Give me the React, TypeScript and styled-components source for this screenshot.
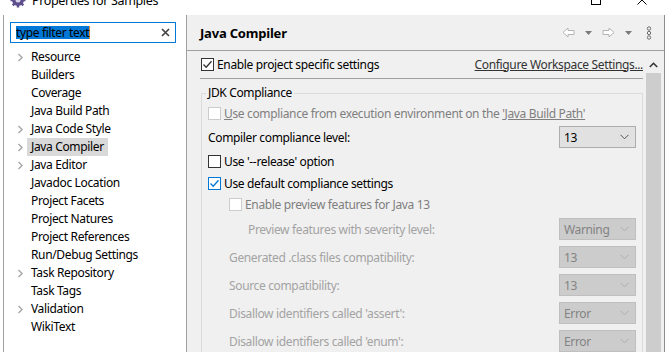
import React from "react";
import styled, { createGlobalStyle } from "styled-components";

const GlobalStyle = createGlobalStyle`
  html, body { margin: 0; padding: 0; overflow: hidden; }
  body {
    font-family: "Noto Sans", "Open Sans", sans-serif;
    font-size: 12px;
    letter-spacing: -0.35px;
    color: #000;
  }
`;

const Window = styled.div`
  width: 669px;
  height: 352px;
  display: flex;
  flex-direction: column;
  overflow: hidden;
  background: #fff;
`;

const TitleBar = styled.div`
  height: 15px;
  flex: none;
  overflow: hidden;
  background: #fff;
`;

const TitleInner = styled.div`
  height: 30px;
  margin-top: -15px;
  display: flex;
  align-items: center;
  padding-left: 10px;
  padding-right: 4px;
`;

const TitleText = styled.span`
  font-size: 12.5px;
  margin-left: 6px;
  color: #000;
`;

const WinButton = styled.div`
  width: 46px;
  display: flex;
  justify-content: center;
  align-items: center;
`;

const Spacer = styled.div`
  flex: 1;
`;

const Body = styled.div`
  flex: 1;
  min-height: 0;
  display: flex;
  background: #fff;
  padding-left: 3px;
  padding-right: 4px;
`;

const Sidebar = styled.aside`
  width: 184px;
  flex: none;
  box-sizing: border-box;
  border-left: 1px solid #a0a0a0;
  border-right: 1px solid #a0a0a0;
  background: #fff;
  padding: 7px 0 0 6px;
`;

const FilterBox = styled.div`
  width: 166px;
  height: 21px;
  box-sizing: border-box;
  border: 1px solid #0078d7;
  display: flex;
  align-items: center;
  padding: 0 5px;
`;

const Selected = styled.span`
  background: #0078d7;
  color: #000;
  line-height: 13px;
  border-right: 1px solid #e8842a;
`;

const Tree = styled.ul`
  list-style: none;
  margin: 5px 0 0;
  padding: 0;
`;

const TreeRow = styled.li`
  height: 18px;
  display: flex;
  align-items: center;
`;

const Twisty = styled.span`
  width: 17px;
  height: 18px;
  flex: none;
  display: flex;
  align-items: center;
`;

const TreeLabel = styled.span<{ $selected?: boolean }>`
  height: 18px;
  line-height: 18px;
  padding: 0 4px;
  background: ${(p) => (p.$selected ? "#d9d9d9" : "transparent")};
`;

const Panel = styled.section`
  width: 478px;
  flex: none;
  box-sizing: border-box;
  border-right: 1px solid #8c8c8c;
  background: #f0f0f0;
  display: flex;
  flex-direction: column;
  min-height: 0;
`;

const Header = styled.header`
  height: 35px;
  flex: none;
  border-bottom: 1px solid #a0a0a0;
  display: flex;
  align-items: center;
  padding: 0 12px 0 13px;
`;

const HeaderTitle = styled.h1`
  margin: 0;
  font-size: 13px;
  font-weight: 700;
  letter-spacing: -0.2px;
`;

const NavIcons = styled.div`
  margin-left: auto;
  display: flex;
  align-items: center;
  gap: 10px;
`;

const Kebab = styled.span`
  margin-left: 4px;
  display: flex;
`;

const Content = styled.div`
  flex: 1;
  min-height: 0;
  display: flex;
  overflow: hidden;
`;

const Main = styled.div`
  flex: 1;
  min-width: 0;
  padding-left: 13px;
  display: flex;
  flex-direction: column;
  overflow: hidden;
`;

const TopRow = styled.div`
  margin-top: 5px;
  height: 16px;
  flex: none;
  display: flex;
  align-items: center;
`;

const Link = styled.a<{ $disabled?: boolean }>`
  color: ${(p) => (p.$disabled ? "#7f7f7f" : "#333")};
  text-decoration: underline;
  cursor: pointer;
`;

const Divider = styled.div`
  margin-top: 6px;
  height: 1px;
  flex: none;
  background: #a0a0a0;
`;

const Group = styled.fieldset`
  margin: 6px 0 0 1px;
  padding: 0 6px;
  border: 1px solid #dcdcdc;
  min-width: 0;
  flex: none;
`;

const Legend = styled.legend`
  padding: 0 2px;
  margin-left: -2px;
  line-height: 16px;
`;

const Row = styled.div<{ $h: number; $indent?: number }>`
  height: ${(p) => p.$h}px;
  padding-left: ${(p) => p.$indent ?? 0}px;
  display: flex;
  align-items: center;
`;

const Label = styled.span<{ $disabled?: boolean }>`
  color: ${(p) => (p.$disabled ? "#a3a3a3" : "#000")};
  white-space: nowrap;
`;

const CheckLabel = styled.span<{ $disabled?: boolean }>`
  margin-left: 3px;
  color: ${(p) => (p.$disabled ? "#7f7f7f" : "#000")};
  white-space: nowrap;
`;

const Box = styled.span<{ $color: string; $offset?: number }>`
  width: 13px;
  height: 13px;
  flex: none;
  box-sizing: border-box;
  margin-left: ${(p) => p.$offset ?? 0}px;
  border: 1px solid ${(p) => p.$color};
  background: #fff;
  display: flex;
  align-items: center;
  justify-content: center;
`;

const Combo = styled.div<{ $disabled?: boolean }>`
  width: 77px;
  height: 22px;
  margin-left: auto;
  flex: none;
  box-sizing: border-box;
  border: 1px solid ${(p) => (p.$disabled ? "#bfbfbf" : "#adadad")};
  background: ${(p) => (p.$disabled ? "#cccccc" : "#e1e1e1")};
  color: ${(p) => (p.$disabled ? "#838383" : "#000")};
  display: flex;
  align-items: center;
  padding: 0 6px 0 4px;
`;

const ComboValue = styled.span`
  flex: 1;
`;

const ScrollBar = styled.div`
  width: 17px;
  flex: none;
  margin: 5px 2px 0 2px;
  display: flex;
  flex-direction: column;
`;

const ScrollUp = styled.div`
  height: 17px;
  display: flex;
  align-items: center;
  justify-content: center;
`;

const Thumb = styled.div`
  flex: 1;
  margin: 0 1px;
  background: #cdcdcd;
`;

const Chevron = () => (
  <svg width="17" height="18" viewBox="0 0 17 18">
    <path d="M8.5 6 L12 9.5 L8.5 13" fill="none" stroke="#a6a6a6" strokeWidth="1.4" />
  </svg>
);

const Check = ({ color }: { color: string }) => (
  <svg width="11" height="11" viewBox="0 0 11 11">
    <path d="M1.5 5.5 L4.2 8.2 L9.5 2.2" fill="none" stroke={color} strokeWidth="1.3" />
  </svg>
);

const Checkbox = ({ state, offset }: { state: "on" | "off" | "blue" | "disabled"; offset?: number }) => {
  const color = state === "disabled" ? "#cccccc" : state === "blue" ? "#0078d7" : "#333";
  return (
    <Box $color={color} $offset={offset}>
      {state === "on" && <Check color="#333" />}
      {state === "blue" && <Check color="#0078d7" />}
    </Box>
  );
};

const DropArrow = ({ disabled }: { disabled?: boolean }) => (
  <svg width="9" height="6" viewBox="0 0 9 6">
    <path d="M0.5 0.8 L4.5 4.8 L8.5 0.8" fill="none" stroke={disabled ? "#adadad" : "#555"} strokeWidth="1" />
  </svg>
);

const ComboBox = ({ value, disabled }: { value: string; disabled?: boolean }) => (
  <Combo $disabled={disabled}>
    <ComboValue>{value}</ComboValue>
    <DropArrow disabled={disabled} />
  </Combo>
);

const HollowArrow = ({ dir }: { dir: "left" | "right" }) => (
  <svg width="13" height="11" viewBox="0 0 13 11" style={dir === "right" ? { transform: "scaleX(-1)" } : undefined}>
    <path d="M1 5.5 L6 1 V3.5 H12 V7.5 H6 V10 Z" fill="#fff" stroke="#b4b4b4" strokeWidth="1" strokeLinejoin="round" />
  </svg>
);

const SmallTri = () => (
  <svg width="7" height="4" viewBox="0 0 7 4">
    <path d="M0 0 H7 L3.5 4 Z" fill="#7a7a7a" />
  </svg>
);

const treeItems: { label: string; kids?: boolean; selected?: boolean }[] = [
  { label: "Resource", kids: true },
  { label: "Builders" },
  { label: "Coverage" },
  { label: "Java Build Path" },
  { label: "Java Code Style", kids: true },
  { label: "Java Compiler", kids: true, selected: true },
  { label: "Java Editor", kids: true },
  { label: "Javadoc Location" },
  { label: "Project Facets" },
  { label: "Project Natures" },
  { label: "Project References" },
  { label: "Run/Debug Settings" },
  { label: "Task Repository", kids: true },
  { label: "Task Tags" },
  { label: "Validation", kids: true },
  { label: "WikiText" },
];

export default function App() {
  return (
    <>
      <GlobalStyle />
      <Window>
        <TitleBar>
          <TitleInner>
            <svg width="16" height="16" viewBox="0 0 16 16">
              <circle cx="8" cy="8" r="6" fill="#5e4f8c" />
              <path d="M8 0.5 V3 M8 13 V15.5 M0.5 8 H3 M13 8 H15.5 M2.7 2.7 L4.5 4.5 M11.5 11.5 L13.3 13.3 M13.3 2.7 L11.5 4.5 M4.5 11.5 L2.7 13.3" stroke="#5e4f8c" strokeWidth="2.4" />
              <circle cx="8" cy="8" r="2.5" fill="#d9d4ea" />
            </svg>
            <TitleText>Properties for Samples</TitleText>
            <Spacer />
            <WinButton>
              <svg width="10" height="10" viewBox="0 0 10 10">
                <rect x="0.5" y="0.5" width="9" height="9" fill="none" stroke="#000" />
              </svg>
            </WinButton>
            <WinButton>
              <svg width="10" height="10" viewBox="0 0 10 10">
                <path d="M0.5 0.5 L9.5 9.5 M9.5 0.5 L0.5 9.5" stroke="#000" strokeWidth="1" />
              </svg>
            </WinButton>
          </TitleInner>
        </TitleBar>
        <Body>
          <Sidebar>
            <FilterBox>
              <Selected>type filter text</Selected>
              <Spacer />
              <svg width="9" height="9" viewBox="0 0 9 9">
                <path d="M1 1 L8 8 M8 1 L1 8" stroke="#444" strokeWidth="1.7" />
              </svg>
            </FilterBox>
            <Tree>
              {treeItems.map((it) => (
                <TreeRow key={it.label}>
                  <Twisty>{it.kids && <Chevron />}</Twisty>
                  <TreeLabel $selected={it.selected}>{it.label}</TreeLabel>
                </TreeRow>
              ))}
            </Tree>
          </Sidebar>
          <Panel>
            <Header>
              <HeaderTitle>Java Compiler</HeaderTitle>
              <NavIcons>
                <HollowArrow dir="left" />
                <SmallTri />
                <HollowArrow dir="right" />
                <SmallTri />
                <Kebab>
                  <svg width="6" height="14" viewBox="0 0 6 14">
                    <circle cx="3" cy="2.5" r="1.7" fill="none" stroke="#6e6e6e" />
                    <circle cx="3" cy="7" r="1.7" fill="none" stroke="#6e6e6e" />
                    <circle cx="3" cy="11.5" r="1.7" fill="none" stroke="#6e6e6e" />
                  </svg>
                </Kebab>
              </NavIcons>
            </Header>
            <Content>
              <Main>
                <TopRow>
                  <Checkbox state="on" offset={1} />
                  <CheckLabel>Enable project specific settings</CheckLabel>
                  <Spacer />
                  <Link>Configure Workspace Settings...</Link>
                </TopRow>
                <Divider />
                <Group>
                  <Legend>JDK Compliance</Legend>
                  <Row $h={24}>
                    <Checkbox state="disabled" />
                    <CheckLabel $disabled>
                      <u>U</u>se compliance from execution environment on the <Link $disabled>'Java Build Path'</Link>
                    </CheckLabel>
                  </Row>
                  <Row $h={24}>
                    <Label>Compiler compliance level:</Label>
                    <ComboBox value="13" />
                  </Row>
                  <Row $h={24}>
                    <Checkbox state="off" />
                    <CheckLabel>Use '--release' option</CheckLabel>
                  </Row>
                  <Row $h={20}>
                    <Checkbox state="blue" />
                    <CheckLabel>Use default compliance settings</CheckLabel>
                  </Row>
                  <Row $h={22} $indent={21}>
                    <Checkbox state="disabled" />
                    <CheckLabel $disabled>Enable preview features for Java 13</CheckLabel>
                  </Row>
                  <Row $h={28} $indent={40}>
                    <Label $disabled>Preview features with severity level:</Label>
                    <ComboBox value="Warning" disabled />
                  </Row>
                  <Row $h={28} $indent={21}>
                    <Label $disabled>Generated .class files compatibility:</Label>
                    <ComboBox value="13" disabled />
                  </Row>
                  <Row $h={28} $indent={21}>
                    <Label $disabled>Source compatibility:</Label>
                    <ComboBox value="13" disabled />
                  </Row>
                  <Row $h={28} $indent={21}>
                    <Label $disabled>Disallow identifiers called 'assert':</Label>
                    <ComboBox value="Error" disabled />
                  </Row>
                  <Row $h={28} $indent={21}>
                    <Label $disabled>Disallow identifiers called 'enum':</Label>
                    <ComboBox value="Error" disabled />
                  </Row>
                </Group>
              </Main>
              <ScrollBar>
                <ScrollUp>
                  <svg width="9" height="6" viewBox="0 0 9 6">
                    <path d="M0.8 5 L4.5 1.3 L8.2 5" fill="none" stroke="#333" strokeWidth="1.6" />
                  </svg>
                </ScrollUp>
                <Thumb />
              </ScrollBar>
            </Content>
          </Panel>
        </Body>
      </Window>
    </>
  );
}
